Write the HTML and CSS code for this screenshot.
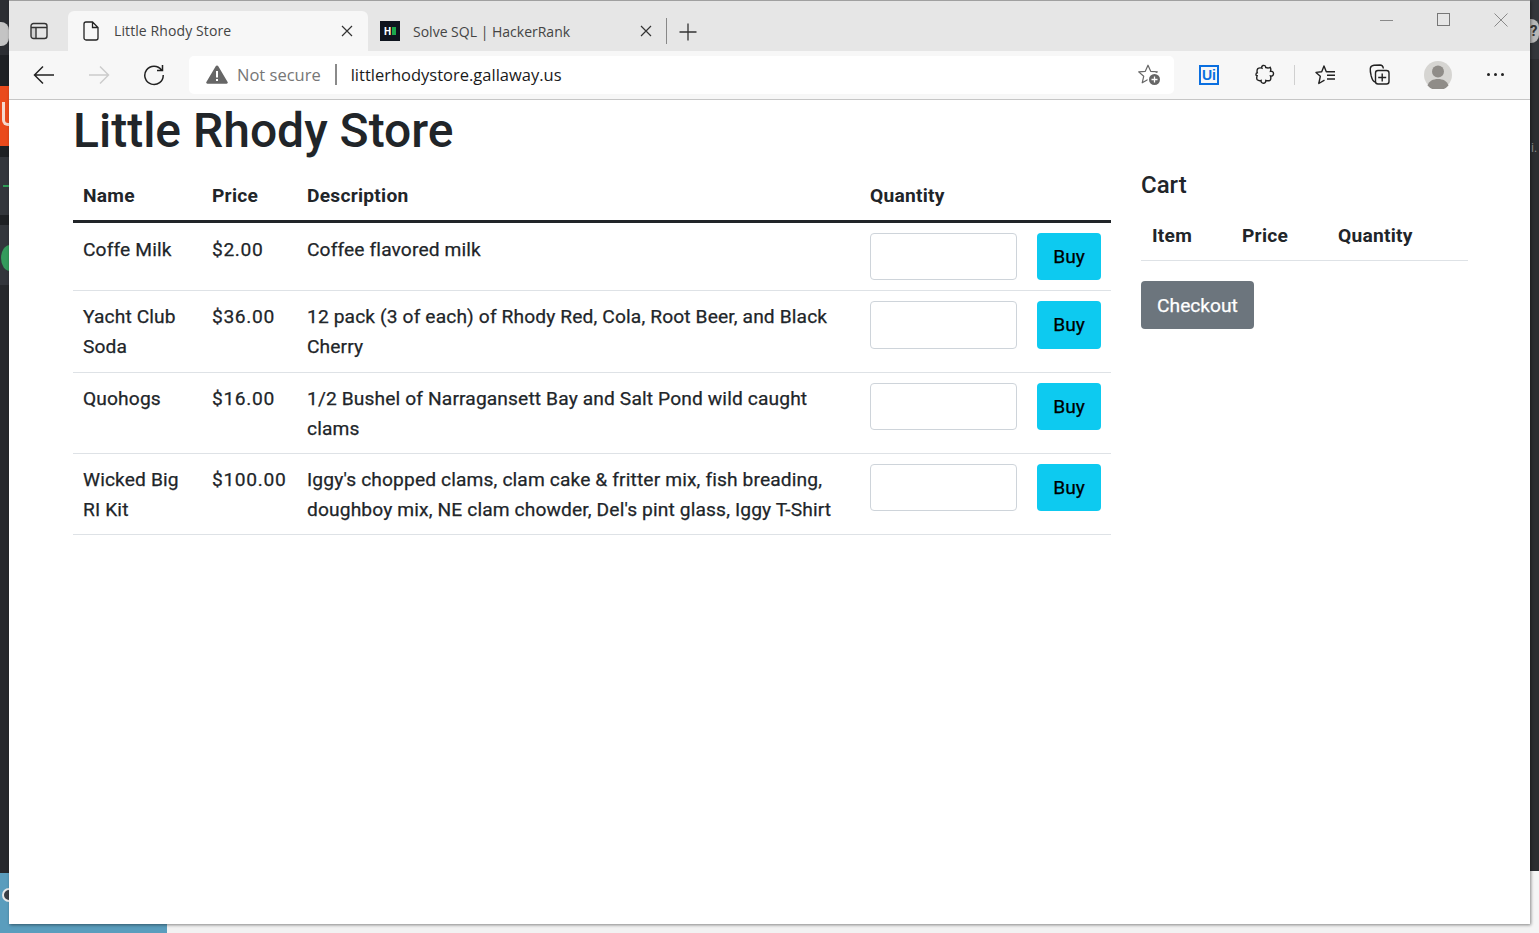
FILE: index.html
```html
<!DOCTYPE html>
<html lang="en">
<head>
<meta charset="utf-8">
<title>Little Rhody Store</title>
<link rel="stylesheet" href="styles.css">
</head>
<body>
<div class="desktop">
  <div class="bg-left"></div>
  <div class="bg-blob"></div>
  <div class="bg-orange"><span class="bg-u"></span></div>
  <div class="bg-green"></div>
  <div class="bg-dash"></div>
  <div class="bg-blue"><span class="bg-circ"></span></div>
  <div class="bg-paper"></div>
  <div class="bg-right-top"></div>
  <div class="bg-right-bottom"></div>
  <div class="bg-help">?</div>
  <div class="bg-frag">i.</div>
  <div class="window">
    <header class="tabbar">
      <div class="tabstrip-btn">
        <svg width="18" height="18" viewBox="0 0 18 18" fill="none" stroke="#333" stroke-width="1.4"><path fill="#d0d0d0" stroke="none" d="M1 5.500h5v11H3.500A2.500 2.500 0 0 1 1 14z"/><rect x="1" y="1.500" width="16" height="15" rx="2.500"/><path d="M1 5.500h16M6 5.500v11"/></svg>
      </div>
      <div class="tab active">
        <svg class="favicon" width="16" height="20" viewBox="0 0 16 20" fill="none" stroke="#222" stroke-width="1.3"><path d="M3 1h6.500L15 6.500V17a2 2 0 0 1-2 2H3a2 2 0 0 1-2-2V3a2 2 0 0 1 2-2zM9.500 1v5.500H15"/></svg>
        <span class="tab-title">Little Rhody Store</span>
        <svg class="tab-x" width="12" height="12" viewBox="0 0 12 12" stroke="#333" stroke-width="1.2"><path d="M1 1l10 10M11 1L1 11"/></svg>
      </div>
      <div class="tab">
        <span class="hr-logo"><span class="hr-h">H</span><span class="hr-g"></span></span>
        <span class="tab-title">Solve SQL | HackerRank</span>
        <svg class="tab-x" width="12" height="12" viewBox="0 0 12 12" stroke="#333" stroke-width="1.2"><path d="M1 1l10 10M11 1L1 11"/></svg>
      </div>
      <span class="tab-sep"></span>
      <svg class="tab-new" width="18" height="18" viewBox="0 0 18 18" stroke="#333" stroke-width="1.3"><path d="M9 .5v17M.5 9h17"/></svg>
      <div class="winctl">
        <svg width="14" height="14" viewBox="0 0 14 14" stroke="#8a8a8a" stroke-width="1"><path d="M0 7.500h13"/></svg>
        <svg width="14" height="14" viewBox="0 0 14 14" fill="none" stroke="#777" stroke-width="1"><rect x=".5" y=".5" width="12" height="12"/></svg>
        <svg width="14" height="14" viewBox="0 0 14 14" stroke="#8a8a8a" stroke-width="1"><path d="M.5.5l13 13M13.500.5l-13 13"/></svg>
      </div>
    </header>
    <nav class="toolbar">
      <svg class="nav-ico" width="22" height="20" viewBox="0 0 22 20" fill="none" stroke="#222" stroke-width="1.5"><path d="M21 10H1.500M10 1.500L1.500 10l8.500 8.500"/></svg>
      <svg class="nav-ico dim" width="22" height="20" viewBox="0 0 22 20" fill="none" stroke="#ccc" stroke-width="1.5"><path d="M1 10h19.500M12 1.500l8.500 8.500-8.500 8.500"/></svg>
      <svg class="nav-ico reload" width="22" height="22" viewBox="0 0 22 22" fill="none" stroke="#222" stroke-width="1.5"><path d="M18.500 6A9.200 9.200 0 1 0 20.200 11M19.500 1v5.500H14"/></svg>
      <div class="addr">
        <svg class="warn" width="22" height="19" viewBox="0 0 22 19"><path fill="#666" d="M11 .5c.6 0 1 .3 1.300.8l9.300 15.600c.5.800 0 1.800-1 1.800H1.400c-1 0-1.500-1-1-1.800L9.700 1.300C10 .8 10.400.5 11 .5z"/><path fill="#fff" d="M10 6h2v6.500h-2zM10 14h2v2h-2z"/></svg>
        <span class="notsec">Not secure</span>
        <span class="addr-sep"></span>
        <span class="url">littlerhodystore.gallaway.us</span>
        <svg class="addfav" width="24" height="22" viewBox="0 0 24 22"><path fill="none" stroke="#666" stroke-width="1.200" stroke-linejoin="round" d="M10 1.200l2.700 6.100 6.600.6-5 4.400 1.500 6.500-5.800-3.400-5.800 3.400 1.500-6.500-5-4.400 6.600-.6z"/><circle cx="16.500" cy="15.500" r="7" fill="#fff"/><circle cx="16.500" cy="15.500" r="5.500" fill="#666"/><path stroke="#fff" stroke-width="1.300" d="M16.500 12.500v6M13.500 15.500h6"/></svg>
      </div>
      <div class="tools">
        <span class="ui-ext">Ui</span>
        <svg class="t-puzzle" width="20" height="21" viewBox="0 0 20 21" fill="none" stroke="#222" stroke-width="1.400"><path d="M8 1.500c1.600-.6 2.800.6 2.700 2 1.600.6 3.400.5 4.500-.2.900 1.200.7 2.700.3 4 1.700-.3 3.100.9 3 2.500 0 1.600-1.500 2.600-3 2.200.5 1.500.7 3-.4 4.300-1.200.6-2.800.6-4.300.2.200 1.500-1 2.900-2.500 2.800-1.500 0-2.500-1.400-2.200-2.800-1.300.4-2.800.2-3.800-.7-.9-1.100-.6-2.800-.2-4.100C.4 11.800.8 8.800 2.300 8.700c-.5-1.400-.3-3 .6-4.200 1.200-.8 2.700-.7 4-.3-.4-1 .1-2.300 1.100-2.700z"/></svg>
        <span class="t-sep"></span>
        <svg class="t-favs" width="21" height="20" viewBox="0 0 21 20" fill="none" stroke="#222" stroke-width="1.400" stroke-linejoin="round"><path d="M14.500 6.700H11.300L9 1 6.700 6.700 1 7.400l4.300 3.900L3.800 18.500l5.700-3.400M12 6.700h8M12 10.200h8M12 14h8"/></svg>
        <svg class="t-coll" width="21" height="21" viewBox="0 0 21 21" fill="none" stroke="#222" stroke-width="1.400"><path d="M6 18C4 17.500 3 15 2.200 12 1.500 9 1 7 1.300 4.500 1.500 2.500 3 1.500 5 1.300l6-.3c2 0 3 1 3.400 3.500"/><rect x="6.500" y="6.500" width="13.500" height="13.500" rx="2.500"/><path d="M13.200 9.500v8M9.200 13.500h8"/></svg>
        <span class="avatar"><svg width="28" height="28" viewBox="0 0 28 28"><circle cx="14" cy="14" r="14" fill="#d6d5d2"/><circle cx="14" cy="10.500" r="6" fill="#8f8c88"/><path fill="#8f8c88" d="M3.500 24.500C5 20 9 18 14 18s9 2 10.500 6.500a14 14 0 0 1-21 0z"/></svg></span>
        <span class="more"><i></i><i></i><i></i></span>
      </div>
    </nav>
    <main class="page">
      <section class="store">
        <h1 class="title">Little Rhody Store</h1>
        <table class="products">
          <thead>
            <tr><th class="c-name">Name</th><th class="c-price">Price</th><th class="c-desc">Description</th><th class="c-qty">Quantity</th><th class="c-buy"></th></tr>
          </thead>
          <tbody>
            <tr class="r1"><td>Coffe Milk</td><td class="money">$2.00</td><td>Coffee flavored milk</td><td class="ctl"><input class="qty" type="text"></td><td class="ctl"><button class="buy">Buy</button></td></tr>
            <tr class="r2"><td>Yacht Club Soda</td><td class="money">$36.00</td><td>12 pack (3 of each) of Rhody Red, Cola, Root Beer, and Black Cherry</td><td class="ctl"><input class="qty" type="text"></td><td class="ctl"><button class="buy">Buy</button></td></tr>
            <tr class="r3"><td>Quohogs</td><td class="money">$16.00</td><td>1/2 Bushel of Narragansett Bay and Salt Pond wild caught clams</td><td class="ctl"><input class="qty" type="text"></td><td class="ctl"><button class="buy">Buy</button></td></tr>
            <tr class="r3"><td>Wicked Big RI Kit</td><td class="money">$100.00</td><td>Iggy's chopped clams, clam cake &amp; fritter mix, fish breading, doughboy mix, NE clam chowder, Del's pint glass, Iggy T-Shirt</td><td class="ctl"><input class="qty" type="text"></td><td class="ctl"><button class="buy">Buy</button></td></tr>
          </tbody>
        </table>
      </section>
      <aside class="cart">
        <h2 class="cart-title">Cart</h2>
        <table class="cart-table">
          <thead><tr><th class="k-item">Item</th><th class="k-price">Price</th><th class="k-qty">Quantity</th></tr></thead>
        </table>
        <button class="checkout">Checkout</button>
      </aside>
    </main>
  </div>
</div>
</body>
</html>
```

FILE: styles.css
```css
* { box-sizing: border-box; }
html, body { margin: 0; height: 100%; overflow: hidden; }
body { font-family: Roboto, "Liberation Sans", Arial, sans-serif; color: #212529; }

.desktop { position: relative; width: 1539px; height: 933px; background: #2b2d31; overflow: hidden; }
.bg-left { position: absolute; left: 0; top: 0; width: 9px; height: 873px; background: linear-gradient(#2c2e33 0 55px, #1e2024 55px 157px, #33363c 157px 215px, #1e2024 215px 225px, #33363c 225px 285px, #26282c 285px); }
.bg-blob { position: absolute; left: 0; top: 22px; width: 9px; height: 24px; border-radius: 0 8px 8px 0; background: #c4c4c4; }
.bg-orange { position: absolute; left: 0; top: 86px; width: 9px; height: 60px; background: #ea4a1c; overflow: hidden; }
.bg-u { position: absolute; left: 2px; top: 16px; width: 14px; height: 24px; border: 3px solid #f4d9cf; border-top: 0; border-radius: 0 0 6px 6px; }
.bg-green { position: absolute; left: 1px; top: 245px; width: 18px; height: 26px; border-radius: 50%; background: #349b5c; }
.bg-dash { position: absolute; left: 3px; top: 185px; width: 6px; height: 2px; background: #2f9c57; }
.bg-blue { position: absolute; left: 0; top: 873px; width: 167px; height: 60px; background: #5a9dbd; }
.bg-circ { position: absolute; left: 2px; top: 15px; width: 14px; height: 14px; border-radius: 50%; background: #3b3f46; border: 2px solid #e8e8e8; }
.bg-paper { position: absolute; left: 167px; top: 924px; width: 1372px; height: 9px; background: #f2f2f2; }
.bg-right-top { position: absolute; left: 1530px; top: 0; width: 9px; height: 59px; background: #33363b; }
.bg-right-bottom { position: absolute; left: 1530px; top: 871px; width: 9px; height: 62px; background: #f5f5f5; }
.bg-help { position: absolute; left: 1530px; top: 19px; width: 9px; height: 24px; font-size: 15px; line-height: 24px; font-weight: 700; color: #333; background: #b8b8b8; border-radius: 0 8px 8px 0; }
.bg-frag { position: absolute; left: 1531px; top: 141px; font-size: 12px; line-height: 14px; color: #8a8d92; }

.window { position: absolute; left: 9px; top: 0; width: 1521px; height: 924px; background: #fff; display: flex; flex-direction: column; border-top: 1px solid #a0a0a0; box-shadow: 1px 1px 3px rgba(0,0,0,.45); }

.tabbar { height: 50px; background: #e6e6e6; display: flex; align-items: flex-end; flex: none; font-family: "Open Sans", sans-serif; }
.tabstrip-btn { width: 59px; height: 40px; display: flex; align-items: center; justify-content: center; }
.tab { width: 300px; height: 40px; display: flex; align-items: center; font-size: 14px; color: #444; padding: 0 15px; }
.tab.active { background: #f7f7f7; border-radius: 6px 6px 0 0; }
.tab .tab-title { flex: 1; margin-left: 13px; }
.tab.active .tab-title { margin-left: 15px; padding-bottom: 1px; letter-spacing: .1px; }
.tab:not(.active) { width: 298px; padding-left: 12px; padding-right: 14px; }
.hr-logo { width: 20px; height: 20px; background: #0e141e; display: flex; align-items: center; justify-content: center; gap: 1px; flex: none; }
.hr-h { color: #fff; font-size: 10px; font-weight: 700; line-height: 1; }
.hr-g { width: 4px; height: 8px; background: #1ba94c; }
.tab-sep { width: 1px; height: 26px; background: #888; margin: 0 0 7px 0; }
.tab-new { margin: 0 0 10px 12px; }
.winctl { margin-left: auto; align-self: flex-start; display: flex; gap: 43px; padding: 12px 22px 0 0; }

.toolbar { height: 49px; flex: none; background: #f7f7f7; border-bottom: 1px solid #c6c6c6; display: flex; align-items: center; padding-bottom: 1px; font-family: "Open Sans", sans-serif; }
.nav-ico { margin-left: 24px; flex: none; }
.nav-ico.dim { margin-left: 33px; }
.nav-ico.reload { margin-left: 33px; }
.addr { margin-left: 24px; width: 985px; height: 38px; background: #fff; border-radius: 5px; display: flex; align-items: center; padding-left: 17px; flex: none; }
.notsec { margin-left: 9px; font-size: 16.5px; color: #767676; }
.addr-sep { width: 2px; height: 21px; background: #8a8a8a; margin: 0 14px 0 14px; }
.url { font-size: 16.5px; color: #1a1a1a; flex: 1; }
.addfav { margin-right: 12px; }
.tools { display: flex; align-items: center; }
.ui-ext { width: 20px; height: 20px; margin-left: 25px; border: 2px solid #0a6fe0; color: #0a6fe0; font: 700 14px/16px "Liberation Sans", sans-serif; text-align: center; }
.t-puzzle { margin-left: 36px; }
.t-sep { width: 1px; height: 20px; background: #d0d0d0; margin-left: 19px; }
.t-favs { margin-left: 20px; }
.t-coll { margin-left: 33px; }
.avatar { margin-left: 34px; height: 28px; }
.more { margin-left: 35px; display: flex; gap: 4px; }
.more i { width: 3px; height: 3px; border-radius: 50%; background: #222; }

.page { flex: 1; display: flex; align-items: flex-start; padding: 0 62px 0 64px; }
.store { width: 1038px; flex: none; }
.title { margin: 0; font-size: 48px; font-weight: 500; line-height: 62px; height: 77px; }
.products { width: 1038px; border-collapse: collapse; table-layout: fixed; font-size: 19.2px; letter-spacing: .13px; -webkit-text-stroke: .25px; }
.products th { font-weight: 700; letter-spacing: .25px; -webkit-text-stroke: 0; text-align: left; padding: 0 10px 5px; height: 44px; border-bottom: 3px solid #212529; vertical-align: middle; }
.c-name { width: 129px; }
.c-price { width: 95px; }
.c-desc { width: 563px; }
.c-qty { width: 167px; }
.c-buy { width: 84px; }
.products td { padding: 11px 10px 9px; line-height: 30px; vertical-align: top; border-bottom: 1px solid #dee2e6; color: #212529; }
.products td.money { letter-spacing: .65px; }
.products .r1 td { padding: 12px 10px 8px; }
.products .r2 td { padding: 11px 10px 10px; }
.products td.ctl, .products .r1 td.ctl, .products .r2 td.ctl { padding: 10px; }
.qty { display: block; width: 147px; height: 47px; border: 1px solid #ced4da; border-radius: 4px; background: #fff; }
.buy { display: block; width: 64px; height: 47px; border: 0; border-radius: 4px; background: #0dcaf0; color: #000; font: 400 19.2px Roboto, sans-serif; padding: 0; }
.r2 .qty, .r2 .buy { height: 48px; }

.cart { margin-left: 30px; width: 327px; flex: none; padding-top: 71px; }
.cart-title { margin: 0; font-size: 24px; font-weight: 500; line-height: 29px; height: 41px; }
.cart-table { width: 327px; border-collapse: collapse; table-layout: fixed; font-size: 19.2px; letter-spacing: .25px; }
.cart-table th { text-align: left; font-weight: 700; padding: 0 10px 0 11px; height: 48px; border-bottom: 1px solid #dee2e6; }
.k-item { width: 90px; }
.k-price { width: 96px; }
.checkout { display: block; margin-top: 20px; width: 113px; height: 48px; border: 0; border-radius: 4px; background: #6c757d; color: #fff; font: 400 19.2px Roboto, sans-serif; -webkit-text-stroke: .25px; padding: 1px 0 0; }
```
